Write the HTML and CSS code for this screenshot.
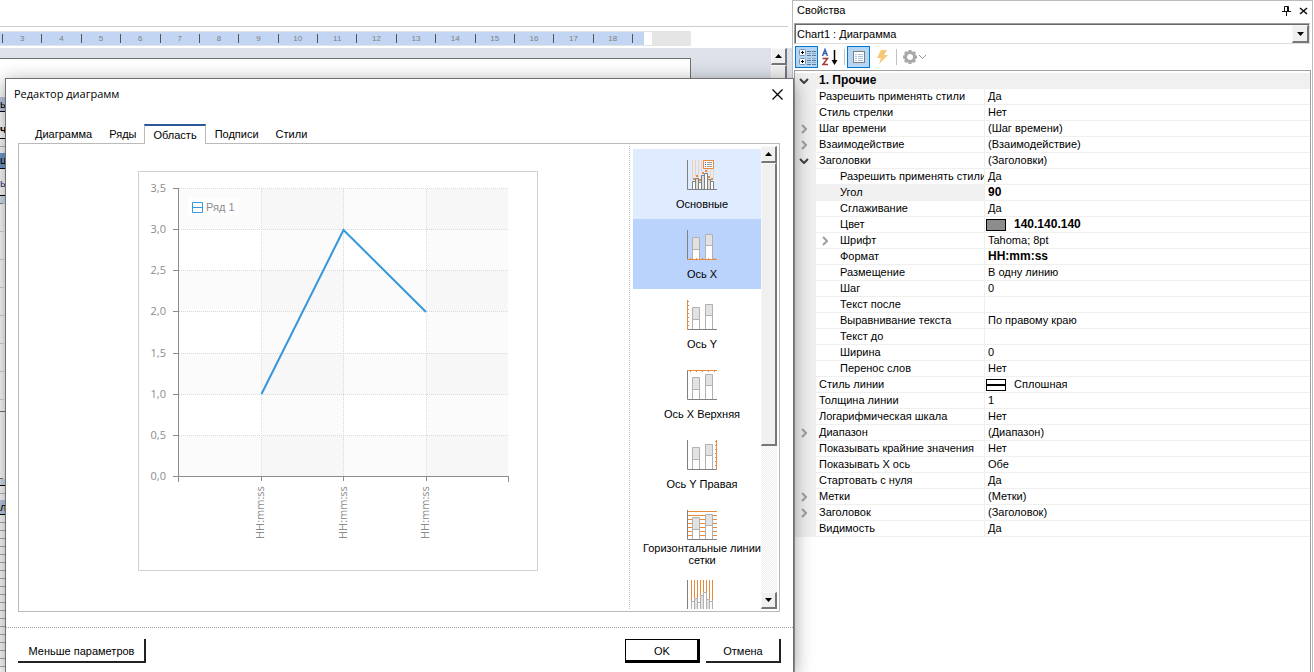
FILE: index.html
```html
<!DOCTYPE html>
<html lang="ru">
<head>
<meta charset="utf-8">
<title>Редактор диаграмм</title>
<link rel="stylesheet" href="styles.css">
</head>
<body>
<svg class="defs" aria-hidden="true">
  <defs>
    <symbol id="bars" viewBox="0 0 31 31">
      <g stroke="#b1b1b1">
        <path d="M5.5 19.5h7v10h-7zM18.5 15.5h7v14h-7z" fill="#fff"/>
        <path d="M5.5 7.5h7v12h-7zM18.5 4.5h7v11h-7z" fill="#e2e2e2"/>
      </g>
    </symbol>
    <symbol id="down" viewBox="0 0 10 6"><path d="M1 1l4 4 4-4" fill="none" stroke="#404040" stroke-width="2"/></symbol>
    <symbol id="right" viewBox="0 0 6 10"><path d="M1 1l4 4-4 4" fill="none" stroke="#a0a0a0" stroke-width="2"/></symbol>
  </defs>
</svg>
<div class="app">
  <main class="designer">
    <div class="band"></div>
    <div class="ruler">
      <div class="scale">
        <span>3</span><span>4</span><span>5</span><span>6</span><span>7</span><span>8</span><span>9</span><span>10</span><span>11</span><span>12</span><span>13</span><span>14</span><span>15</span><span>16</span><span>17</span><span>18</span><i class="stub"></i>
      </div>
      <div class="rest"></div>
    </div>
    <div class="canvas">
      <div class="sheet">
        <div class="strip">
          <div class="gap37"></div>
          <div class="cell head">ы</div>
          <div class="cell plain"><b>ч</b></div>
          <div class="cell thin"></div>
          <div class="cell field">ц</div>
          <div class="cell data">ы_</div>
          <div class="cell pale"></div>
          <div class="dots"></div><div class="dots"></div><div class="dots"></div><div class="dots"></div><div class="dots"></div><div class="dots"></div><div class="dots"></div>
          <div class="cell end"></div>
          <div class="cell blank"></div>
          <div class="cell foot"></div>
          <div class="cell thin"></div>
          <div class="cell head">л_</div>
          <div class="lines"></div>
        </div>
      </div>
      <div class="vscroll">
        <button class="sb" type="button" aria-label="Вверх"><svg width="7" height="4"><path d="M0 4L3.500 0 7 4z"/></svg></button>
        <div class="thumb"></div>
      </div>
    </div>
  </main>

  <aside class="props">
    <header class="ptitle"><span>Свойства</span>
      <svg width="26" height="11" viewBox="0 0 26 11" fill="none" stroke="#111">
        <path d="M2.500 1.500h4v5h-4zM0 6.500h9M4.500 7v4M5.500 2v4"/>
        <path d="M18 3l7 6M25 3l-7 6" stroke-width="1.600"/>
      </svg>
    </header>
    <div class="combo">
      <select aria-label="Компонент"><option>Chart1 : Диаграмма</option></select>
      <span class="drop"><svg width="7" height="4"><path d="M0 0h7L3.500 4z"/></svg></span>
    </div>
    <div class="tools">
      <button class="tool on" type="button" aria-label="По категориям"><svg width="18" height="18" viewBox="0 0 18 18" fill="none"><g stroke="#7a8fb5" fill="#fff"><rect x="1.500" y="1.500" width="6" height="6" rx="1"/><rect x="1.500" y="10.500" width="6" height="6" rx="1"/></g><path d="M3 4.500h3M4.500 3v3M3 13.500h3M4.500 12v3" stroke="#000"/><path d="M9 3.500h4M9 7.500h4M9 12.500h4M9 16.500h4M14 3.500h4M14 7.500h4M14 12.500h4M14 16.500h4" stroke="#56799f"/><path d="M9 5.500h4M9 10.500h4M9 14.500h4M14 5.500h4M14 10.500h4M14 14.500h4" stroke="#98a6b8"/></svg></button>
      <button class="tool" type="button" aria-label="По алфавиту"><svg width="18" height="18" viewBox="0 0 18 18" fill="none"><path d="M1.500 8L4 1.500 6.500 8M2.500 5.500h3" stroke="#3c64ad" stroke-width="1.500"/><path d="M1.500 10.500h5L2 16.500h5" stroke="#a23a3a" stroke-width="1.500"/><path d="M13.500 2v12" stroke="#000" stroke-width="1.500"/><path d="M10.500 12h6l-3 5z" fill="#000"/></svg></button>
      <i class="sep"></i>
      <button class="tool on" type="button" aria-label="Свойства"><svg width="18" height="18" viewBox="0 0 18 18" fill="none"><rect x="3.500" y="3.500" width="11" height="11" fill="#fff" stroke="#808080"/><path d="M5 6.500h2M5 8.500h2M5 10.500h2M5 12.500h2M8 6.500h5M8 8.500h5M8 10.500h5M8 12.500h5" stroke="#a6c2e0"/></svg></button>
      <button class="tool" type="button" aria-label="События"><svg width="18" height="18" viewBox="0 0 18 18"><path d="M8 2h6l-3 5h4L6 16l2-6H4z" fill="#f6c977"/></svg></button>
      <i class="sep"></i>
      <button class="tool wide" type="button" aria-label="Параметры"><svg width="26" height="18" viewBox="0 0 26 18" fill="none"><circle cx="9" cy="9" r="4.500" stroke="#a8a8a8" stroke-width="3"/><g stroke="#a8a8a8" stroke-width="3"><path d="M9 2v2M9 14v2M2 9h2M14 9h2M4 4l1.500 1.500M12.500 12.500L14 14M14 4l-1.500 1.500M5.500 12.500L4 14"/></g><path d="M18 7l3.500 3.500L25 7" stroke="#999"/></svg></button>
    </div>
    <div class="grid">
      <table>
        <colgroup><col class="cg"><col class="cn"><col></colgroup>
        <tbody>
        <tr class="cat"><td><svg width="10" height="6"><use href="#down"/></svg></td><th colspan="2">1. Прочие</th></tr>
        <tr><td></td><th>Разрешить применять стили</th><td>Да</td></tr>
        <tr><td></td><th>Стиль стрелки</th><td>Нет</td></tr>
        <tr><td><svg width="6" height="10"><use href="#right"/></svg></td><th>Шаг времени</th><td>(Шаг времени)</td></tr>
        <tr><td><svg width="6" height="10"><use href="#right"/></svg></td><th>Взаимодействие</th><td>(Взаимодействие)</td></tr>
        <tr><td><svg width="10" height="6"><use href="#down"/></svg></td><th>Заголовки</th><td>(Заголовки)</td></tr>
        <tr class="sub"><td></td><th>Разрешить применять стили</th><td>Да</td></tr>
        <tr class="sub sel"><td></td><th>Угол</th><td><b>90</b></td></tr>
        <tr class="sub"><td></td><th>Сглаживание</th><td>Да</td></tr>
        <tr class="sub"><td></td><th>Цвет</th><td class="pic"><span class="swatch"></span><b>140.140.140</b></td></tr>
        <tr class="sub exp"><td></td><th><svg width="6" height="10"><use href="#right"/></svg>Шрифт</th><td>Tahoma; 8pt</td></tr>
        <tr class="sub"><td></td><th>Формат</th><td><b>HH:mm:ss</b></td></tr>
        <tr class="sub"><td></td><th>Размещение</th><td>В одну линию</td></tr>
        <tr class="sub"><td></td><th>Шаг</th><td>0</td></tr>
        <tr class="sub"><td></td><th>Текст после</th><td></td></tr>
        <tr class="sub"><td></td><th>Выравнивание текста</th><td>По правому краю</td></tr>
        <tr class="sub"><td></td><th>Текст до</th><td></td></tr>
        <tr class="sub"><td></td><th>Ширина</th><td>0</td></tr>
        <tr class="sub"><td></td><th>Перенос слов</th><td>Нет</td></tr>
        <tr><td></td><th>Стиль линии</th><td class="pic"><span class="swatch line"></span>Сплошная</td></tr>
        <tr><td></td><th>Толщина линии</th><td>1</td></tr>
        <tr><td></td><th>Логарифмическая шкала</th><td>Нет</td></tr>
        <tr><td><svg width="6" height="10"><use href="#right"/></svg></td><th>Диапазон</th><td>(Диапазон)</td></tr>
        <tr><td></td><th>Показывать крайние значения</th><td>Нет</td></tr>
        <tr><td></td><th>Показывать X ось</th><td>Обе</td></tr>
        <tr><td></td><th>Стартовать с нуля</th><td>Да</td></tr>
        <tr><td><svg width="6" height="10"><use href="#right"/></svg></td><th>Метки</th><td>(Метки)</td></tr>
        <tr><td><svg width="6" height="10"><use href="#right"/></svg></td><th>Заголовок</th><td>(Заголовок)</td></tr>
        <tr><td></td><th>Видимость</th><td>Да</td></tr>
        </tbody>
      </table>
    </div>
  </aside>
</div>

<section class="dialog" role="dialog" aria-labelledby="dlg">
  <header class="dtitle"><h1 id="dlg">Редактор диаграмм</h1>
    <button type="button" class="close" aria-label="Закрыть"><svg width="11" height="11" viewBox="0 0 11 11"><path d="M.5.5l10 10M10.500.5l-10 10" stroke="#000" stroke-width="1.200"/></svg></button>
  </header>
  <nav class="tabs" role="tablist">
    <button type="button" role="tab">Диаграмма</button>
    <button type="button" role="tab">Ряды</button>
    <button type="button" role="tab" class="active" aria-selected="true">Область</button>
    <button type="button" role="tab">Подписи</button>
    <button type="button" role="tab">Стили</button>
  </nav>
  <div class="pane">
    <div class="preview">
      <svg class="chart" width="400" height="400" viewBox="0 0 400 400">
        <rect x=".5" y=".5" width="399" height="399" fill="#fff" stroke="#d0d0d0"/>
        <g fill="#000" fill-opacity=".016">
          <path d="M41 18h329v41H41zM41 100h329v41H41zM41 182h329v41H41zM41 265h329v41H41z"/>
          <path d="M124 18h82v288h-82zM289 18h81v288h-81z"/>
        </g>
        <path d="M41 17.500h329M41 58.500h329M41 99.500h329M41 140.500h329M41 182.500h329M41 223.500h329M41 264.500h329M123.500 18v288M205.500 18v288M288.500 18v288" stroke="#d9d9d9" stroke-dasharray="1 1"/>
        <path d="M40.500 17v294M35 305.500h336M370.500 305v6M123.500 305v5M205.500 305v5M288.500 305v5M35 17.500h5M35 58.500h5M35 99.500h5M35 140.500h5M35 182.500h5M35 223.500h5M35 264.500h5" fill="none" stroke="#8c8c8c"/>
        <rect x="50" y="27" width="50" height="17" fill="#fff"/>
        <path d="M54.500 31.500h10v10h-10zM54 36.500h11" fill="none" stroke="#3498db"/>
        <path d="M123.500 223L205.500 59 288 141" fill="none" stroke="#3498db" stroke-width="2"/>
        <g class="val" text-anchor="end">
          <text x="28" y="21">3,5</text><text x="28" y="62">3,0</text><text x="28" y="103">2,5</text><text x="28" y="144">2,0</text><text x="28" y="186">1,5</text><text x="28" y="227">1,0</text><text x="28" y="268">0,5</text><text x="28" y="309">0,0</text>
        </g>
        <text class="leg" x="68" y="40">Ряд 1</text>
        <g class="val">
          <text transform="translate(126 368) rotate(-90)">HH:mm:ss</text>
          <text transform="translate(209 368) rotate(-90)">HH:mm:ss</text>
          <text transform="translate(291 368) rotate(-90)">HH:mm:ss</text>
        </g>
      </svg>
    </div>
    <div class="side">
      <div class="list">
        <button type="button" class="item hover">
          <svg width="31" height="31"><path d="M5.500 0v19M8.500 0v16M11.500 0v19M14.500 0v11M17.500 0v9M20.500 0v15M23.500 0v17M26.500 0v19" stroke="#f6cfae"/><g stroke="#808080"><path d="M5.500 21.500h3v8h-3zM11.500 22.500h3v7h-3zM17.500 13.500h3v16h-3zM23.500 21.500h3v8h-3z" fill="#fff"/><path d="M8.500 18.500h3v11h-3zM14.500 15.500h3v14h-3zM20.500 19.500h3v10h-3z" fill="#ddd"/></g><path d="M6 18h2v2H6zM9 15h2v2H9zM12 19h2v2h-2zM15 12h2v2h-2zM18 10h2v2h-2zM21 16h2v2h-2zM24 18h2v2h-2z" fill="#e88a3c"/><path d="M16.500.5h10v8h-10z" fill="#fff" stroke="#e88a3c"/><path d="M18 2.500h1M18 6.500h1" stroke="#d43"/><path d="M18 4.500h1" stroke="#36c"/><path d="M20 2.500h5M20 4.500h5M20 6.500h5" stroke="#999"/><path d="M.5 0v29.500H30" fill="none" stroke="#808080"/></svg>
          <span>Основные</span></button>
        <button type="button" class="item current">
          <svg width="31" height="31"><use href="#bars"/><path d="M.5 0v29" stroke="#808080"/><path d="M0 29.500h30M3.500 28v1M9.500 28v1M15.500 28v1M21.500 28v1M27.500 28v1" stroke="#e88a3c"/></svg>
          <span>Ось X</span></button>
        <button type="button" class="item">
          <svg width="31" height="31"><use href="#bars"/><path d="M0 29.500h30" stroke="#808080"/><path d="M.5 0v30M1 1.500h1M1 5.500h1M1 9.500h1M1 13.500h1M1 17.500h1M1 21.500h1M1 25.500h1" stroke="#e88a3c"/></svg>
          <span>Ось Y</span></button>
        <button type="button" class="item">
          <svg width="31" height="31"><use href="#bars"/><path d="M.5 0v29.500H30" fill="none" stroke="#808080"/><path d="M0 .5h30M3.500 1v1M9.500 1v1M15.500 1v1M21.500 1v1M27.500 1v1" stroke="#e88a3c"/></svg>
          <span>Ось X Верхняя</span></button>
        <button type="button" class="item">
          <svg width="31" height="31"><use href="#bars"/><path d="M.5 0v29.500H30" fill="none" stroke="#808080"/><path d="M29.500 0v30M28 1.500h1M28 5.500h1M28 9.500h1M28 13.500h1M28 17.500h1M28 21.500h1M28 25.500h1" stroke="#e88a3c"/></svg>
          <span>Ось Y Правая</span></button>
        <button type="button" class="item">
          <svg width="31" height="31"><path d="M1 1.500h29M1 5.500h29M1 9.500h29M1 13.500h29M1 17.500h29M1 21.500h29M1 25.500h29" stroke="#e88a3c"/><use href="#bars"/><path d="M.5 0v29.500H30" fill="none" stroke="#808080"/></svg>
          <span>Горизонтальные линии сетки</span></button>
        <button type="button" class="item">
          <svg width="31" height="31"><path d="M4.500 0v21M7.500 0v18M10.500 0v21M13.500 0v15M16.500 0v12M19.500 0v18M22.500 0v19M25.500 0v21" stroke="#e88a3c"/><g stroke="#b1b1b1"><path d="M4.500 21.500h3v8h-3zM10.500 22.500h3v7h-3zM16.500 12.500h3v17h-3zM22.500 21.500h3v8h-3z" fill="#fff"/><path d="M7.500 18.500h3v11h-3zM13.500 15.500h3v14h-3zM19.500 19.500h3v10h-3z" fill="#e2e2e2"/></g><path d="M.5 0v29.500" fill="none" stroke="#808080"/></svg>
        </button>
      </div>
      <div class="vscroll inner">
        <button class="sb" type="button" aria-label="Вверх"><svg width="7" height="4"><path d="M0 4L3.500 0 7 4z"/></svg></button>
        <div class="thumb"></div>
        <div class="track"></div>
        <button class="sb" type="button" aria-label="Вниз"><svg width="7" height="4"><path d="M0 0h7L3.500 4z"/></svg></button>
      </div>
    </div>
  </div>
  <footer class="dfoot">
    <button type="button" class="btn less">Меньше параметров</button>
    <span class="fill"></span>
    <button type="button" class="btn ok">OK</button>
    <button type="button" class="btn">Отмена</button>
  </footer>
</section>
</body>
</html>
```
FILE: styles.css
```css
* { box-sizing: border-box; }
html, body { height: 100%; }
body {
  margin: 0;
  overflow: hidden;
  background: #fff;
  color: #000;
  font: 11px/16px "Liberation Sans", Arial, sans-serif;
}
button, select {
  margin: 0;
  padding: 0;
  border: 0;
  background: none;
  color: inherit;
  font: inherit;
}
svg { display: block; flex: none; }
.defs { position: absolute; width: 0; height: 0; }

.app { display: flex; height: 100%; }
.designer { flex: 1; min-width: 0; display: flex; flex-direction: column; }
.band { height: 27px; border-bottom: 1px solid #ccc; margin-right: 4px; }

.ruler { display: flex; width: 691px; height: 15px; margin: 4px 0 2px; border: 1px solid #e4e4e4; border-width: 1px 0; }
.scale { flex: 1; display: flex; align-items: center; padding-left: 2px; background: #c2d5f2; }
.scale span {
  flex: 1;
  height: 9px;
  border-left: 1px solid #555;
  color: #808080;
  font-size: 8px;
  line-height: 9px;
  text-align: center;
}
.stub { width: 12px; height: 9px; border-left: 1px solid #555; }
.rest { width: 47px; border-left: 8px solid #fff; background: #e5e5e5; }

.canvas { flex: 1; display: flex; justify-content: space-between; min-height: 0; padding-right: 5px; background: #dde1e9; }
.sheet { width: 691px; margin-top: 10px; border: 1px solid #707070; border-width: 1px 1px 0 0; background: #fff; overflow: hidden; }
.strip { width: 20px; white-space: nowrap; }
.gap37 { height: 38px; }
.cell { height: 15px; border-bottom: 1px solid #000; line-height: 14px; }
.cell.head { background: #bccbe6; }
.cell.plain { height: 27px; line-height: 34px; }
.cell.thin { height: 14px; background: linear-gradient(#fff 7px, #bbb 7px, #bbb 8px, #fff 8px); border-bottom: 0; }
.cell.field { height: 16px; background: #6f9dd0; }
.cell.data { height: 27px; color: #22408c; line-height: 28px; }
.cell.pale { height: 8px; background: #d5e4ee; border-bottom: 1px dashed #888; }
.dots { height: 28px; border-bottom: 1px dotted #ccc; }
.cell.end { height: 12px; border-color: #777; }
.cell.blank { height: 67px; border-bottom: 1px dashed #777; }
.cell.foot { height: 7px; background: #d5e4ee; }
.lines { height: 160px; background: repeating-linear-gradient(#fff 0 7px, #aaa 7px 8px); }

.vscroll { display: flex; flex-direction: column; width: 16px; background: #eee; }
.sb, .thumb, .drop {
  border: 1px solid #f8f8f8;
  border-right: 2px solid #777;
  border-bottom: 2px solid #777;
  background: #f0f0f0;
}
.sb { height: 17px; flex: none; display: flex; align-items: center; justify-content: center; }
.thumb { flex: 1; }

.props { width: 521px; display: flex; flex-direction: column; padding: 0 1px; border: 1px solid #bbb; border-bottom: 0; margin-right: 1px; }
.ptitle { display: flex; align-items: center; justify-content: space-between; height: 18px; padding: 0 3px; }
.combo { position: relative; height: 21px; margin: 4px 1px 2px 0; border: 1px solid #a0a0a0; border-right-color: #ddd; border-bottom-color: #ddd; background: #fff; }
.combo select { width: 100%; height: 19px; padding-left: 1px; border-top: 1px solid #696969; border-left: 1px solid #696969; appearance: none; outline: 0; }
.drop { position: absolute; right: 0; top: 1px; bottom: 0; width: 17px; display: flex; align-items: center; justify-content: center; pointer-events: none; }
.tools { display: flex; align-items: center; height: 22px; margin-bottom: 2px; padding-left: 1px; }
.tool { width: 23px; height: 22px; display: flex; align-items: center; justify-content: center; border: 1px solid transparent; }
.tool.on { background: #b5d6f2; border-color: #0078d7; }
.tool.wide { width: 30px; }
.sep { width: 1px; height: 16px; margin: 0 2px 0 3px; background: #c0c0c0; }
.grid { flex: 1; overflow: hidden; padding-top: 2px; border: 1px solid #a0a0a0; border-bottom: 0; }

table { width: 100%; table-layout: fixed; border-collapse: separate; border-spacing: 0; }
.cg { width: 21px; }
.cn { width: 169px; }
th, td { height: 16px; padding: 0 0 0 3px; border-bottom: 1px solid #efefef; line-height: 15px; font-weight: 400; text-align: left; white-space: nowrap; overflow: hidden; }
th { border-right: 1px solid #efefef; }
tr > td:first-child { padding: 0 3px 0 0; background: #f0f0f0; border-color: #f0f0f0; }
td:first-child svg { margin: 0 auto; }
.cat th { background: #f0f0f0; font-weight: 700; font-size: 12px; border-right: 0; }
.sub th { padding-left: 24px; }
.sel th { background: #f0f0f0; }
td b { font-size: 12px; }
.exp th { display: flex; align-items: center; gap: 12px; padding-left: 6px; }
.pic { display: flex; align-items: center; gap: 8px; padding-left: 1px; }
.swatch { width: 20px; height: 12px; border: 1px solid #000; background: #8c8c8c; }
.swatch.line { background: linear-gradient(#fff 4px, #000 4px, #000 6px, #fff 6px); }

.dialog {
  position: absolute;
  top: 78px;
  bottom: 0;
  left: 5px;
  right: 520px;
  display: flex;
  flex-direction: column;
  border: 1px solid #707070;
  border-bottom: 0;
  background: #fff;
  box-shadow: 0 4px 18px rgba(0, 0, 0, .4);
}
.dtitle { display: flex; justify-content: space-between; align-items: center; height: 30px; padding: 0 10px 0 8px; }
h1 { margin: 0; font: 11px/16px "Open Sans", "Noto Sans", sans-serif; }
.tabs { display: flex; height: 20px; margin: 15px 0 -1px 20px; position: relative; }
.tabs button { padding: 0 8px 0 9px; }
.tabs .active { border: 1px solid #bababa; border-top: 2px solid #2b579a; border-bottom: 0; padding: 0 8px; background: #fff; }
.pane { flex: 1; min-height: 0; display: flex; margin: 0 13px 0 12px; border: 1px solid #bababa; }
.preview { flex: 1; display: flex; justify-content: center; align-items: flex-start; padding: 27px 0 0 28px; }
.val { font: 11px "Open Sans", "Noto Sans", sans-serif; fill: #8c8c8c; }
.leg { font: 11px "Liberation Sans", Arial, sans-serif; fill: #8c8c8c; }
.side { display: flex; margin: 2px 2px 2px 0; padding-left: 3px; border-left: 1px dotted #bbb; }
.list { width: 128px; margin-top: 3px; overflow: hidden; }
.item { width: 100%; height: 70px; display: flex; flex-direction: column; align-items: center; padding: 11px 0 0 10px; line-height: 12px; }
.item span { flex: 1; display: flex; align-items: center; max-height: 25px; }
.hover { background: #dfebff; }
.current { background: #bad3fd; }
.inner .thumb { flex: 0 0 283px; }
.track { flex: 1; background: repeating-conic-gradient(#fff 0 25%, #eee 0 50%) 0 0 / 2px 2px; }

.dfoot { display: flex; align-items: flex-start; gap: 6px; height: 45px; margin-top: 15px; padding: 11px 12px 0; border-top: 1px dotted #a0a0a0; }
.fill { flex: 1; }
.btn { width: 75px; height: 24px; padding: 1px 0 0 1px; border-right: 2px solid #222; border-bottom: 2px solid #222; }
.less { width: 128px; }
.ok { border: 1px solid #000; border-right-width: 3px; border-bottom-width: 3px; }
```
